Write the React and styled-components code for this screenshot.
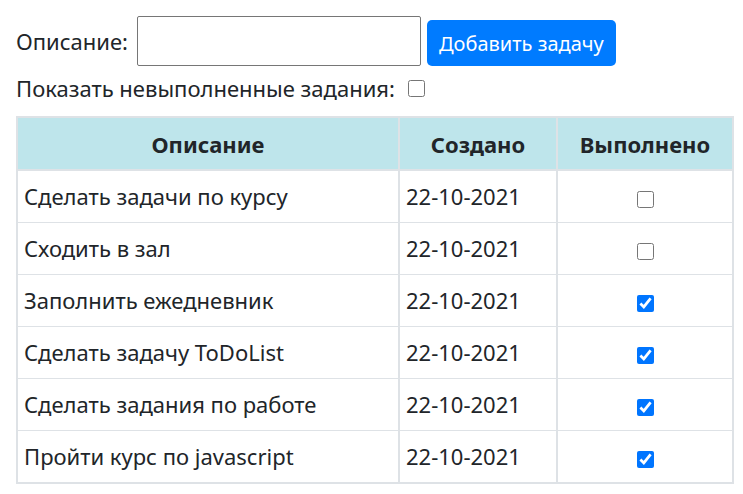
import React, { useState } from "react";
import styled, { createGlobalStyle } from "styled-components";

const GlobalStyle = createGlobalStyle`
  body {
    margin: 0;
    font-family: "Noto Sans", "Open Sans", sans-serif;
    font-size: 22px;
    color: #212529;
    background: #fff;
  }
`;

const initialTasks = [
  { id: 1, text: "Сделать задачи по курсу", date: "22-10-2021", done: false },
  { id: 2, text: "Сходить в зал", date: "22-10-2021", done: false },
  { id: 3, text: "Заполнить ежедневник", date: "22-10-2021", done: true },
  { id: 4, text: "Сделать задачу ToDoList", date: "22-10-2021", done: true },
  { id: 5, text: "Сделать задания по работе", date: "22-10-2021", done: true },
  { id: 6, text: "Пройти курс по javascript", date: "22-10-2021", done: true },
];

export default function App() {
  const [tasks, setTasks] = useState(initialTasks);
  const [desc, setDesc] = useState("");
  const [onlyOpen, setOnlyOpen] = useState(false);

  const toggle = (id) =>
    setTasks(tasks.map((t) => (t.id === id ? { ...t, done: !t.done } : t)));

  const addTask = () => {
    if (!desc.trim()) return;
    setTasks([...tasks, { id: Date.now(), text: desc, date: "22-10-2021", done: false }]);
    setDesc("");
  };

  const shown = onlyOpen ? tasks.filter((t) => !t.done) : tasks;

  return (
    <Page>
      <GlobalStyle />
      <AddRow>
        <Label>Описание:</Label>
        <TextInput value={desc} onChange={(e) => setDesc(e.target.value)} />
        <AddButton onClick={addTask}>Добавить задачу</AddButton>
      </AddRow>
      <FilterRow>
        <Label>Показать невыполненные задания:</Label>
        <Check checked={onlyOpen} onChange={() => setOnlyOpen(!onlyOpen)} />
      </FilterRow>
      <Table>
        <colgroup>
          <col style={{ width: 382 }} />
          <col style={{ width: 158 }} />
          <col style={{ width: 176 }} />
        </colgroup>
        <thead>
          <tr>
            <Th>Описание</Th>
            <Th>Создано</Th>
            <Th>Выполнено</Th>
          </tr>
        </thead>
        <tbody>
          {shown.map((t) => (
            <tr key={t.id}>
              <Td>{t.text}</Td>
              <Td>{t.date}</Td>
              <Td $center>
                <Check checked={t.done} onChange={() => toggle(t.id)} />
              </Td>
            </tr>
          ))}
        </tbody>
      </Table>
    </Page>
  );
}

const Page = styled.div`
  padding: 16px 12px 0 16px;
`;

const AddRow = styled.div`
  display: flex;
  align-items: center;
  height: 50px;
`;

const Label = styled.span`
  line-height: 27px;
  white-space: nowrap;
`;

const TextInput = styled.input`
  box-sizing: border-box;
  width: 284px;
  height: 50px;
  margin-left: 9px;
  border: 1px solid #767676;
  border-radius: 2px;
  font: inherit;
  padding: 4px 8px;
`;

const AddButton = styled.button`
  box-sizing: border-box;
  height: 46px;
  margin-left: 6px;
  margin-top: 4px;
  padding: 0 12px;
  border: none;
  border-radius: 5px;
  background: #007bff;
  color: #fff;
  font: inherit;
  font-size: 20px;
  cursor: pointer;
`;

const FilterRow = styled.div`
  display: flex;
  align-items: center;
  gap: 13px;
  margin-top: 9px;
`;

const Check = styled.input.attrs({ type: "checkbox" })`
  width: 17px;
  height: 17px;
  margin: 0;
  accent-color: #0075ff;
`;

const Table = styled.table`
  width: 716px;
  table-layout: fixed;
  margin-top: 14px;
  border-collapse: collapse;
  border: 2px solid #dee2e6;
`;

const Th = styled.th`
  background: #bee5eb;
  padding: 12px 8px 11px;
  line-height: 28px;
  font-size: 22px;
  font-weight: 700;
  text-align: center;
  white-space: nowrap;
  border: 2px solid #dee2e6;
  border-top: none;
`;

const Td = styled.td`
  padding: 12px 6px;
  line-height: 27px;
  text-align: ${(p) => (p.$center ? "center" : "left")};
  vertical-align: middle;
  white-space: nowrap;
  border-top: 1px solid #dee2e6;
  border-bottom: 1px solid #dee2e6;
  border-left: 2px solid #dee2e6;
  border-right: 2px solid #dee2e6;

  input {
    vertical-align: middle;
  }
`;
